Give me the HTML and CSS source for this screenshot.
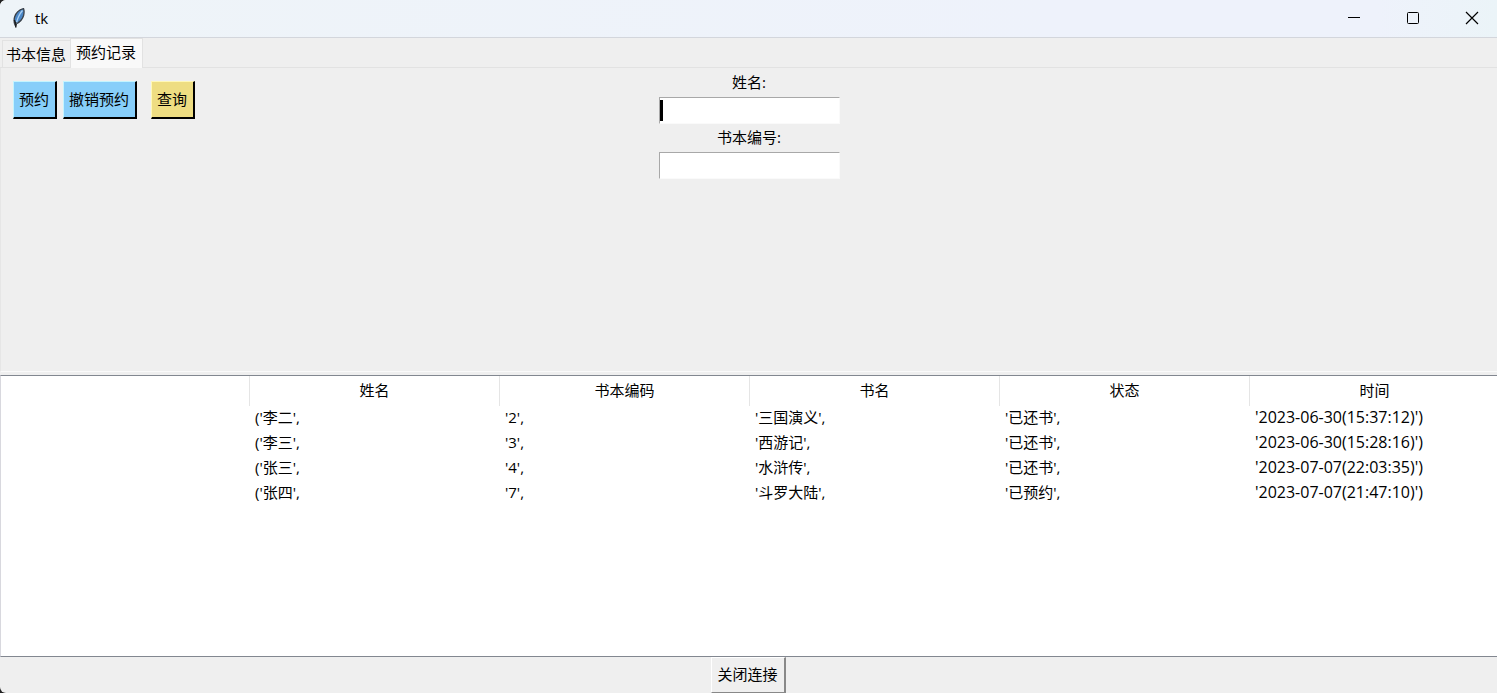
FILE: index.html
```html
<!DOCTYPE html>
<html lang="zh-CN">
<head>
<meta charset="utf-8">
<title>tk</title>
<link rel="stylesheet" href="styles.css">
</head>
<body>
<div class="window">
  <header class="titlebar">
    <svg class="feather" width="14" height="20" viewBox="0 0 14 20" aria-hidden="true">
      <path d="M11.500 .6C8 1.500 4 4.500 2.600 9c-.8 2.800-.6 5.200.2 7.400l.8 1.600.9-2.200C8.200 13.800 10.600 11 11.600 7.500c.6-2.500.8-4.700-.1-6.900z" fill="#4a86c6" stroke="#3a4048" stroke-width="1.300"/>
      <path d="M10.500 2.500C7.500 6 5.400 10.500 4.200 15.500" fill="none" stroke="#a8d0f4" stroke-width="1.300"/>
      <path d="M2.400 12l1 3M3.800 14v5.500" fill="none" stroke="#1c1c1c" stroke-width="1.400"/>
    </svg>
    <span class="title">tk</span>
    <div class="controls">
      <button class="control" aria-label="最小化"><svg width="14" height="14" viewBox="0 0 14 14"><path d="M1 6.500h12"/></svg></button>
      <button class="control" aria-label="最大化"><svg width="14" height="14" viewBox="0 0 14 14"><rect x="1.500" y="1.500" width="11" height="11" rx="1"/></svg></button>
      <button class="control" aria-label="关闭"><svg width="14" height="14" viewBox="0 0 14 14"><path d="M1 1l12 12M13 1L1 13"/></svg></button>
    </div>
  </header>
  <nav class="tabs" role="tablist">
    <button class="tab" role="tab" aria-selected="false">书本信息</button>
    <button class="tab tab-active" role="tab" aria-selected="true">预约记录</button>
  </nav>
  <main class="pane">
    <div class="toolbar">
      <button class="btn btn-blue">预约</button>
      <button class="btn btn-blue">撤销预约</button>
      <button class="btn btn-gold">查询</button>
    </div>
    <form class="fields">
      <label class="label" for="name">姓名:</label>
      <div class="entry"><input class="input" id="name" type="text"><span class="caret"></span></div>
      <label class="label" for="code">书本编号:</label>
      <div class="entry"><input class="input" id="code" type="text"></div>
    </form>
  </main>
  <section class="records">
    <table class="table">
      <thead>
        <tr><th></th><th>姓名</th><th>书本编码</th><th>书名</th><th>状态</th><th>时间</th></tr>
      </thead>
      <tbody>
        <tr><td></td><td>('李二',</td><td>'2',</td><td>'三国演义',</td><td>'已还书',</td><td class="time">'2023-06-30(15:37:12)')</td></tr>
        <tr><td></td><td>('李三',</td><td>'3',</td><td>'西游记',</td><td>'已还书',</td><td class="time">'2023-06-30(15:28:16)')</td></tr>
        <tr><td></td><td>('张三',</td><td>'4',</td><td>'水浒传',</td><td>'已还书',</td><td class="time">'2023-07-07(22:03:35)')</td></tr>
        <tr><td></td><td>('张四',</td><td>'7',</td><td>'斗罗大陆',</td><td>'已预约',</td><td class="time">'2023-07-07(21:47:10)')</td></tr>
      </tbody>
    </table>
  </section>
  <footer class="footer">
    <button class="btn btn-plain">关闭连接</button>
  </footer>
</div>
</body>
</html>
```
FILE: styles.css
```css
* { box-sizing: border-box; }

body {
  margin: 0;
  background: #222;
  color: #000;
  font: 15px/20px "Open Sans", "Noto Sans CJK SC", sans-serif;
}

button, input { font: inherit; color: inherit; }

.window {
  display: flex;
  flex-direction: column;
  min-height: 100vh;
  background: #efefef;
  border-radius: 6px 0 0 6px;
  overflow: hidden;
}

.titlebar {
  display: flex;
  align-items: center;
  height: 38px;
  padding: 0 0 2px 12px;
  border-bottom: 1px solid #d3d6dc;
  background: linear-gradient(90deg, #eef4f8, #eef2fb 70%, #eef2fb 92%, #ebf4f8);
}

.title { padding-left: 9px; }

.controls { display: flex; margin-right: -4px; margin-left: auto; }

.control {
  display: flex;
  align-items: center;
  justify-content: center;
  width: 59px;
  height: 36px;
  padding: 0;
  border: 0;
  background: none;
}

.control svg { fill: none; stroke: #000; stroke-width: 1; }
.control:last-child svg { stroke-width: 1.2; }

.tabs {
  display: flex;
  align-items: flex-end;
  height: 30px;
  padding-left: 2px;
  border-bottom: 1px solid #e2e2e2;
}

.tab {
  height: 27px;
  padding: 0 4px 0 3px;
  border: 1px solid #e2e2e2;
  border-width: 1px 0 0 1px;
  background: #f0f0f0;
}

.tab-active {
  height: 30px;
  margin-bottom: -1px;
  padding: 0 6px 4px 5px;
  border-width: 1px 1px 0;
  background: #f9f9f9;
}

.pane {
  display: grid;
  grid-template-columns: 1fr auto 1fr;
  align-items: start;
  min-height: 304px;
  padding: 4px 12px;
  border-left: 1px solid #e6e6e6;
  border-bottom: 1px solid #fafafa;
}

.toolbar { display: flex; gap: 6px; padding-top: 9px; }

.btn {
  height: 38px;
  padding: 0 6px 2px 5px;
  border: 2px solid;
}

.btn-blue { background: #87cefa; border-color: #c4f4ff #000 #000 #c4f4ff; border-width: 1px 2px 2px 1px; }
.btn-gold { margin-left: 8px; background: #eedd82; border-color: #fff8b8 #000 #000 #fff8b8; border-width: 1px 2px 2px 1px; }
.btn-plain { height: 36px; background: #efefef; border-color: #fff #888 #888 #fff; border-width: 1px 2px 1px 1px; }

.fields { display: flex; flex-direction: column; align-items: center; }
.label { height: 25px; }

.entry { position: relative; margin-bottom: 3px; }

.input {
  display: block;
  width: 181px;
  height: 27px;
  padding: 0 4px;
  border: 1px solid;
  border-color: #a8a8a8 #fafafa #fafafa #a8a8a8;
  background: #fff;
  outline: none;
}

.caret {
  position: absolute;
  left: 1px;
  top: 3px;
  width: 3px;
  height: 21px;
  background: #000;
}

.records {
  flex: 1;
  margin-top: 3px;
  border: solid #828790;
  border-width: 1px 0;
  border-left: 1px solid #d8d8de;
  background: #fff;
  overflow: hidden;
}

.table { width: calc(100% + 2px); border-collapse: separate; border-spacing: 0; table-layout: fixed; }
.table th { height: 30px; padding: 0 0 2px; font-weight: normal; border-left: 1px solid #e5e5e5; }
.table th:first-child { width: 248px; border-left: 0; }
.table td { height: 25px; padding: 0 6px 3px; line-height: 22px; white-space: nowrap; }
.table .time { font-size: 16px; }

.footer { display: flex; justify-content: center; height: 36px; }
```
